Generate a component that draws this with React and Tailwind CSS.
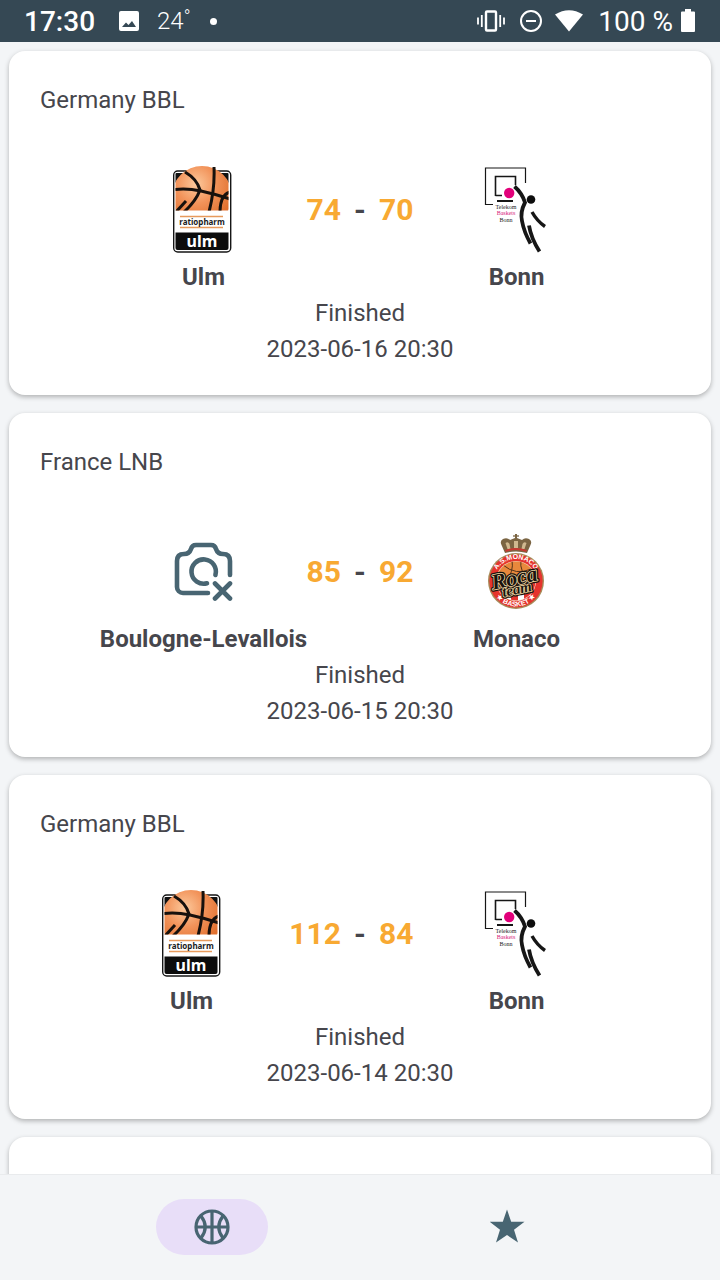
import React from "react";

function UlmLogo() {
  return (
    <svg viewBox="0 0 60 88" className="h-[88px] w-[60px]" role="img" aria-label="ratiopharm ulm">
      <defs>
        <radialGradient id="ulmBall" cx="0.4" cy="0.3" r="0.65">
          <stop offset="0" stopColor="#fcc99c" />
          <stop offset="0.5" stopColor="#f2935a" />
          <stop offset="1" stopColor="#e0702f" />
        </radialGradient>
        <clipPath id="ulmClip">
          <path d="M2.500 0H55.500V44.500H2.500Z" />
        </clipPath>
      </defs>
      <rect x="0.700" y="5" width="57" height="81" rx="4" fill="#fff" stroke="#161616" strokeWidth="1.400" />
      <path d="M2.500 17V8q0-1 1-1h9q-7 3-10 10ZM55.500 17V8q0-1-1-1h-9q7 3 10 10Z" fill="#111" />
      <g clipPath="url(#ulmClip)">
        <circle cx="29" cy="30" r="30" fill="url(#ulmBall)" />
        <g fill="none" stroke="#17110d" strokeWidth="3">
          <path d="M2 23.500Q14 22 28 25T57 33" />
          <path d="M41 1Q42 23 36 46" />
          <path d="M12 6Q24 13 27 24Q23 35 11 46" />
          <path d="M3 46L13 35" />
          <path d="M57 26Q47 29 47 46" />
        </g>
      </g>
      <path d="M7 50.500H50M7 61.500H50" stroke="#e79a5c" strokeWidth="1.500" />
      <text x="29" y="58.500" textAnchor="middle" fontFamily="Noto Sans, sans-serif" fontWeight="700" fontSize="8" fill="#1b1b1b">ratiopharm</text>
      <path d="M2.500 66.500H55.500V82q0 2-2 2H4.500q-2 0-2-2Z" fill="#0c0c0c" />
      <text x="29" y="80.500" textAnchor="middle" fontFamily="Noto Sans, sans-serif" fontWeight="700" fontSize="16" fill="#fff">ulm</text>
    </svg>
  );
}

function BonnLogo() {
  return (
    <svg viewBox="0 0 66 86" className="h-[86px] w-[66px]" role="img" aria-label="Telekom Baskets Bonn">
      <g fill="none" stroke="#161616">
        <path d="M9 37.500H1.500V1H41.500V16" strokeWidth="1.200" />
        <path d="M11.500 29V9.500H31.500V18M11.500 28.500H18" strokeWidth="1.600" />
        <path d="M13 34H29" strokeWidth="2" />
        <path d="M30.500 19.500Q38 26 41 35.500Q36 45 38 54Q40 65 46.500 76.500" strokeWidth="3.800" />
        <path d="M45 58.500Q47 71 55.500 84.500" strokeWidth="3.800" />
        <path d="M48 45Q53 54 61 59.500" strokeWidth="3.400" />
      </g>
      <circle cx="25.200" cy="26" r="5.200" fill="#e2007a" />
      <circle cx="47" cy="32.500" r="4.300" fill="#0d0d0d" />
      <g fontFamily="Liberation Serif, serif" fontSize="6" textAnchor="middle">
        <text x="22" y="41.500" fill="#222">Telekom</text>
        <text x="22" y="48" fill="#d6197c">Baskets</text>
        <text x="22" y="55" fill="#222">Bonn</text>
      </g>
    </svg>
  );
}

function MonacoLogo() {
  return (
    <svg viewBox="0 0 58 76" className="h-[76px] w-[58px]" role="img" aria-label="A.S. Monaco Basket">
      <defs>
        <path id="monacoTop" d="M6 47A22 22 0 0 1 50 47" />
        <path id="monacoBottom" d="M2.500 47A25.500 25.500 0 0 0 53.500 47" />
        <clipPath id="monacoDisc">
          <circle cx="28" cy="47" r="19.500" />
        </clipPath>
      </defs>
      <path d="M17 19L13.500 11Q11.500 7 15 5Q19 3 22 6L27 4V0H29V4L34 6Q37 3 41 5Q44.500 7 42.500 11L39 19Q28 16 17 19Z" fill="#7b6543" />
      <path d="M17.500 9q2.500-2 4 1l1 5h-3ZM26 7h4v7h-4ZM34.500 10q1.500-3 4-1l-2 6h-3Z" fill="#cfb88f" />
      <path d="M17.500 17Q28 13 38.500 17" fill="none" stroke="#c63a32" strokeWidth="2" />
      <path d="M25 2H31" stroke="#7b6543" strokeWidth="1.300" />
      <circle cx="28" cy="47" r="28" fill="#a88b5a" />
      <circle cx="28" cy="47" r="26.600" fill="#e5342d" />
      <circle cx="28" cy="47" r="20" fill="#f3d9bf" />
      <g clipPath="url(#monacoDisc)">
        <path d="M6 26H50V49H6Z" fill="#e8883c" />
        <path d="M6 49H50V70H6Z" fill="#fff" />
        <path d="M6 49H17V70H6ZM23 49H30V70H23ZM36 49H50V70H36Z" fill="#e3342d" />
        <path d="M15 31Q28 42 43 35M24 26Q26 38 18 47M33 26Q31 38 42 46" fill="none" stroke="#54331b" strokeWidth="1" />
      </g>
      <g fontFamily="Liberation Sans, sans-serif" fontWeight="700" fontSize="7" fill="#fff" textAnchor="middle">
        <text>
          <textPath href="#monacoTop" startOffset="50%">A.S.MONACO</textPath>
        </text>
        <text>
          <textPath href="#monacoBottom" startOffset="50%">★ BASKET ★</textPath>
        </text>
      </g>
      <g fontFamily="Liberation Serif, serif" fontWeight="700" fontStyle="italic" fill="#f0d3a0" stroke="#19140f" strokeWidth="4" strokeLinejoin="round" paintOrder="stroke" textAnchor="middle">
        <text x="27" y="51" fontSize="22" transform="rotate(-12 27 47)">Roca</text>
        <text x="29" y="60" fontSize="15" transform="rotate(-12 29 56)">team</text>
      </g>
      <g fontFamily="Liberation Serif, serif" fontWeight="700" fontStyle="italic" fill="#19140f" stroke="#f0d3a0" strokeWidth="1.600" strokeLinejoin="round" paintOrder="stroke" textAnchor="middle">
        <text x="27" y="51" fontSize="22" transform="rotate(-12 27 47)">Roca</text>
        <text x="29" y="60" fontSize="15" transform="rotate(-12 29 56)">team</text>
      </g>
    </svg>
  );
}

function NoPhotoIcon() {
  return (
    <svg viewBox="0 0 60 60" className="size-[60px]" fill="none" stroke="#486572" strokeWidth="4.600" strokeLinecap="round" strokeLinejoin="round" role="img" aria-label="No logo">
      <path d="M35 51H10A6 6 0 0 1 4 45V19Q4 12 11 12C15 12 17 10 18 7C18.600 4.500 20 3 23 3H38C41 3 42.400 4.500 43 7C44 10 46 12 50 12Q57 12 57 19V33" />
      <path d="M34 41.300A12.200 12.200 0 1 1 42.400 33" />
      <path d="M42 41.500L57 56.500M57 41.500L42 56.500" />
    </svg>
  );
}

const LOGOS = { ulm: UlmLogo, bonn: BonnLogo, monaco: MonacoLogo, none: NoPhotoIcon };

const MATCHES = [
  {
    league: "Germany BBL",
    home: { name: "Ulm", logo: "ulm", score: 74 },
    away: { name: "Bonn", logo: "bonn", score: 70 },
    date: "2023-06-16 20:30",
  },
  {
    league: "France LNB",
    home: { name: "Boulogne-Levallois", logo: "none", score: 85 },
    away: { name: "Monaco", logo: "monaco", score: 92 },
    date: "2023-06-15 20:30",
  },
  {
    league: "Germany BBL",
    home: { name: "Ulm", logo: "ulm", score: 112 },
    away: { name: "Bonn", logo: "bonn", score: 84 },
    date: "2023-06-14 20:30",
  },
];

function Team({ name, logo }) {
  const Logo = LOGOS[logo];
  return (
    <div className="flex w-[60px] shrink-0 flex-col items-center">
      <div className="flex h-[98px] items-center">
        <Logo />
      </div>
      <span className="font-bold whitespace-nowrap">{name}</span>
    </div>
  );
}

function Score({ children }) {
  return <span className="flex h-[98px] items-center text-[30px] font-bold text-[#f8a932]">{children}</span>;
}

function MatchCard({ league, home, away, date }) {
  return (
    <article className="shrink-0 rounded-2xl bg-white pt-[31px] pb-7 shadow-[0_2px_5px_rgba(0,0,0,0.28)]">
      <h2 className="px-[31px]">{league}</h2>
      <div className="mt-[43px] flex">
        <div className="flex flex-1 basis-0">
          <div className="grow-[9]" />
          <Team {...home} />
          <div className="grow-[4]" />
          <Score>{home.score}</Score>
        </div>
        <span className="flex h-[98px] w-[38px] items-center justify-center text-[30px] font-bold">-</span>
        <div className="flex flex-1 basis-0">
          <Score>{away.score}</Score>
          <div className="grow-[4]" />
          <Team {...away} />
          <div className="grow-[9]" />
        </div>
      </div>
      <p className="text-center">Finished</p>
      <p className="text-center">
        <time>{date}</time>
      </p>
    </article>
  );
}

function StatusBar() {
  return (
    <header className="flex h-[42px] shrink-0 items-center bg-[#354854] pr-[25px] pl-6 text-[28px] leading-none text-white">
      <span className="pt-0.5 font-medium">17:30</span>
      <svg viewBox="0 0 20 20" className="ml-6 size-5" aria-hidden="true">
        <path fillRule="evenodd" fill="#fff" d="M2 0H18Q20 0 20 2V18Q20 20 18 20H2Q0 20 0 18V2Q0 0 2 0ZM3 16H17L13 10L9.500 14L7 11.500Z" />
      </svg>
      <span className="ml-[18px] flex items-start text-2xl leading-none font-light">
        24<span className="text-lg leading-4">°</span>
      </span>
      <span className="ml-5 size-[7px] rounded-full bg-white" />
      <svg viewBox="0 0 28 22" className="ml-auto h-[22px] w-7" fill="none" stroke="#fff" aria-hidden="true">
        <rect x="9" y="1.500" width="10" height="19" rx="1" strokeWidth="2.400" />
        <path d="M1 7.500V14.500M4.800 5V17M23.200 5V17M27 7.500V14.500" strokeWidth="1.800" />
      </svg>
      <svg viewBox="0 0 22 22" className="ml-[15px] size-[22px]" fill="none" stroke="#fff" strokeWidth="2" aria-hidden="true">
        <circle cx="11" cy="11" r="10" />
        <path d="M6 11H16" />
      </svg>
      <svg viewBox="0 0 28 22" className="ml-[13px] h-[22px] w-7" aria-hidden="true">
        <path d="M0 4.500Q14-4 28 4.500L14 21.500Z" fill="#fff" />
      </svg>
      <span className="ml-[15px] pt-0.5">100 %</span>
      <svg viewBox="0 0 14 24" className="ml-2 h-6 w-3.5" aria-hidden="true">
        <path d="M4 0H10V2.500H13Q14 2.500 14 3.500V22Q14 23 13 23H1Q0 23 0 22V3.500Q0 2.500 1 2.500H4Z" fill="#fff" />
      </svg>
    </header>
  );
}

function BottomNav() {
  return (
    <nav className="grid h-[106px] shrink-0 grid-cols-2 items-center justify-items-center border-t border-[#e9ebed] bg-[#f3f5f7] px-16 pb-0.5">
      <button type="button" aria-label="Matches" aria-current="page" className="flex h-14 w-28 items-center justify-center rounded-full bg-[#e8def8]">
        <svg viewBox="0 0 36 36" className="size-9" fill="none" stroke="#486572" strokeWidth="3.200">
          <circle cx="18" cy="18" r="16" />
          <path d="M18 2V34M2 18H34M7 7Q15.500 18 7 29M29 7Q20.500 18 29 29" />
        </svg>
      </button>
      <button type="button" aria-label="Favorites" className="flex h-14 w-28 items-center justify-center">
        <svg viewBox="0 0 36 36" className="size-9" fill="#486572">
          <path d="M17 .5L21.200 12.700H34.500L24 20.700L28 33.500L17 26L6 33.500L10 20.700L-.5 12.700H12.800Z" />
        </svg>
      </button>
    </nav>
  );
}

export default function App() {
  return (
    <div className="flex h-screen flex-col bg-[#f3f5f7] font-[Roboto,sans-serif] text-2xl leading-9 text-[#46464c]">
      <StatusBar />
      <main className="flex min-h-0 flex-1 flex-col gap-[18px] overflow-hidden px-[9px] pt-[9px]">
        {MATCHES.map((match) => (
          <MatchCard key={match.date} {...match} />
        ))}
        <div className="h-24 shrink-0 rounded-2xl bg-white shadow-[0_2px_5px_rgba(0,0,0,0.28)]" />
      </main>
      <BottomNav />
    </div>
  );
}
